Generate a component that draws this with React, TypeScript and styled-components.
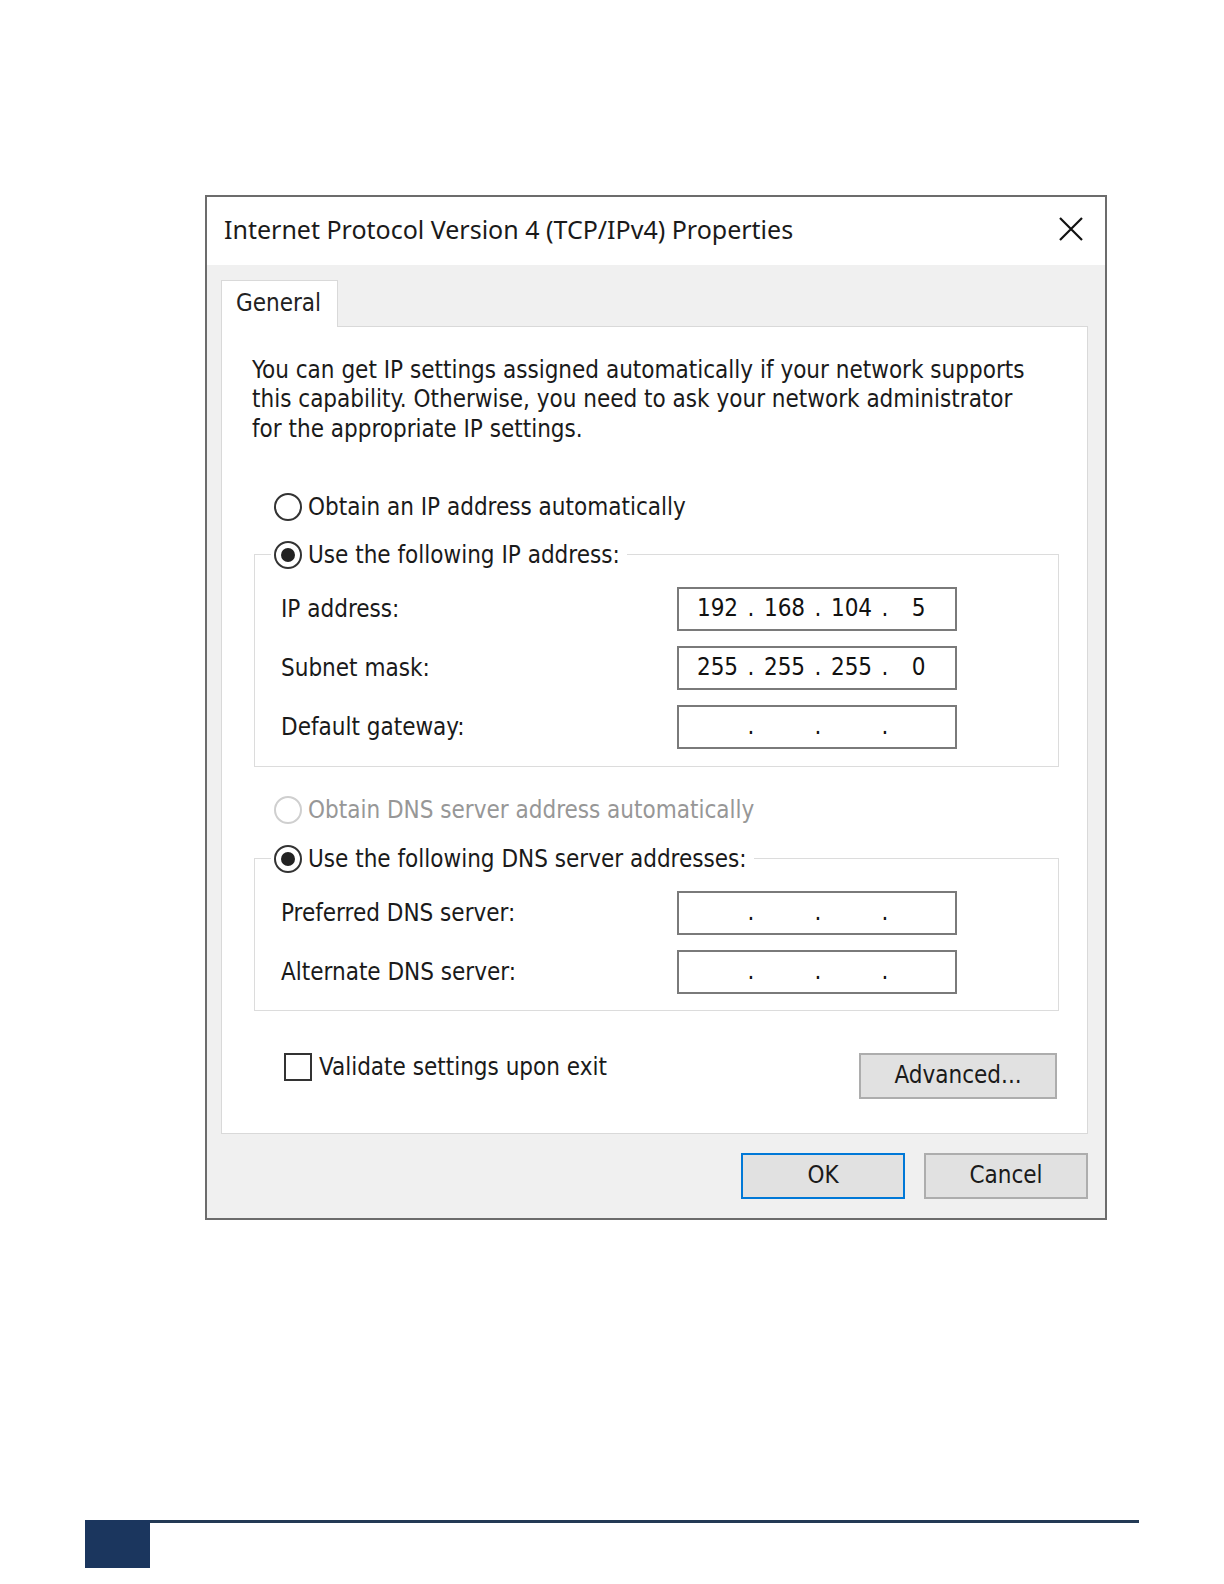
import React from "react";
import styled, { createGlobalStyle } from "styled-components";

const Global = createGlobalStyle`
  html, body { margin: 0; padding: 0; background: #ffffff; }
  body { width: 1224px; min-height: 1584px; }
  * { box-sizing: border-box; }
`;

const BODY_FONT = `"DejaVu Sans Condensed", "DejaVu Sans", "Liberation Sans", sans-serif`;

const Page = styled.div`
  width: 1224px;
  height: 1584px;
  padding-top: 195px;
  display: flex;
  flex-direction: column;
`;

const Dialog = styled.div`
  margin-left: 205px;
  width: 902px;
  height: 1025px;
  border: 2px solid #6c6c6c;
  background: #f0f0f0;
  display: flex;
  flex-direction: column;
`;

const TitleBar = styled.div`
  height: 68px;
  flex-shrink: 0;
  background: #ffffff;
  display: flex;
  align-items: center;
  justify-content: space-between;
  padding: 0 21px 4px 17px;
`;

const Title = styled.div`
  font-family: "Noto Sans", "Open Sans", sans-serif;
  font-size: 25px;
  color: #1a1a1a;
`;

const CloseIcon = () => (
  <svg width="26" height="26" viewBox="0 0 26 26">
    <path d="M2 2 L24 24 M24 2 L2 24" stroke="#111" strokeWidth="2.2" fill="none" />
  </svg>
);

const Body = styled.div`
  flex: 1;
  display: flex;
  flex-direction: column;
  padding: 15px 17px 0 14px;
`;

const TabStrip = styled.div`
  display: flex;
  height: 47px;
  position: relative;
  z-index: 1;
  margin-bottom: -1px;
`;

const Tab = styled.div`
  width: 117px;
  height: 47px;
  background: #ffffff;
  border: 1px solid #d9d9d9;
  border-bottom: none;
  display: flex;
  align-items: center;
  padding: 0 0 2px 14px;
  font-family: ${BODY_FONT};
  font-size: 24px;
  color: #222;
`;

const Panel = styled.div`
  height: 808px;
  flex-shrink: 0;
  background: #ffffff;
  border: 1px solid #d9d9d9;
  display: flex;
  flex-direction: column;
  padding: 29px 28px 0 32px;
  font-family: ${BODY_FONT};
  font-size: 24px;
  color: #1a1a1a;
`;

const Paragraph = styled.p`
  margin: 0 0 0 -2px;
  line-height: 29.3px;
  white-space: nowrap;
`;

const OptionRow = styled.label<{ $top: number; $disabled?: boolean }>`
  display: flex;
  align-items: center;
  gap: 6px;
  height: 30px;
  margin-top: ${(p) => p.$top}px;
  margin-left: 20px;
  color: ${(p) => (p.$disabled ? "#979797" : "#1a1a1a")};
`;

const RadioCircle = styled.span<{ $checked?: boolean; $disabled?: boolean }>`
  width: 28px;
  height: 28px;
  border-radius: 50%;
  border: 2px solid ${(p) => (p.$disabled ? "#cfcfcf" : "#333")};
  background: #fff;
  display: flex;
  align-items: center;
  justify-content: center;
  flex-shrink: 0;
  &::after {
    content: "";
    width: 14px;
    height: 14px;
    border-radius: 50%;
    background: #222;
    display: ${(p) => (p.$checked ? "block" : "none")};
  }
`;

const Group = styled.fieldset<{ $top: number; $bottom: number }>`
  margin: ${(p) => p.$top}px 0 0 0;
  border: 1px solid #dcdcdc;
  padding: 0 101px ${(p) => p.$bottom}px 26px;
  display: flex;
  flex-direction: column;
  gap: 15px;
`;

const Legend = styled.legend`
  margin-left: -10px;
  padding: 0 7px 0 3px;
  display: flex;
  align-items: center;
  gap: 6px;
  height: 30px;
  margin-bottom: 17px;
`;

const FieldRow = styled.div`
  display: flex;
  align-items: center;
  justify-content: space-between;
  height: 44px;
`;

const FieldLabel = styled.span``;

const IpBox = styled.div`
  width: 280px;
  height: 44px;
  border: 2px solid #7a7a7a;
  display: grid;
  grid-template-columns: 59px 8px 59px 8px 59px 8px 59px;
  align-items: center;
  padding: 0 0 1px 9px;
  color: #111;
`;

const Cell = styled.span`
  text-align: center;
`;

const Dot = styled.span`
  text-align: center;
`;

const BottomRow = styled.div`
  display: flex;
  justify-content: space-between;
  align-items: flex-start;
  margin-top: 42px;
  padding: 0 2px 0 30px;
`;

const CheckRow = styled.label`
  display: flex;
  align-items: center;
  gap: 7px;
  height: 28px;
`;

const CheckBox = styled.span`
  width: 28px;
  height: 28px;
  border: 2px solid #333;
  background: #fff;
  flex-shrink: 0;
`;

const Button = styled.button<{ $w: number; $default?: boolean; $top?: number }>`
  width: ${(p) => p.$w}px;
  height: 46px;
  margin-top: ${(p) => p.$top ?? 0}px;
  background: #e1e1e1;
  border: 2px solid ${(p) => (p.$default ? "#0078d7" : "#adadad")};
  font-family: ${BODY_FONT};
  font-size: 24px;
  color: #1a1a1a;
  padding: 0 0 2px 0;
  display: flex;
  align-items: center;
  justify-content: center;
`;

const ButtonBar = styled.div`
  display: flex;
  justify-content: flex-end;
  gap: 19px;
  margin-top: 19px;
`;

const Footer = styled.div`
  margin: 300px 0 0 85px;
  width: 1054px;
  display: flex;
  align-items: flex-start;
`;

const FooterSquare = styled.div`
  width: 65px;
  height: 48px;
  background: #1b365e;
`;

const FooterLine = styled.div`
  flex: 1;
  height: 3px;
  background: #233a55;
`;

type Ip = [string, string, string, string];

const IpField = ({ v }: { v: Ip }) => (
  <IpBox>
    <Cell>{v[0]}</Cell>
    <Dot>.</Dot>
    <Cell>{v[1]}</Cell>
    <Dot>.</Dot>
    <Cell>{v[2]}</Cell>
    <Dot>.</Dot>
    <Cell>{v[3]}</Cell>
  </IpBox>
);

const empty: Ip = ["", "", "", ""];

export default function App() {
  return (
    <>
      <Global />
      <Page>
        <Dialog>
          <TitleBar>
            <Title>Internet Protocol Version 4 (TCP/IPv4) Properties</Title>
            <CloseIcon />
          </TitleBar>
          <Body>
            <TabStrip>
              <Tab>General</Tab>
            </TabStrip>
            <Panel>
              <Paragraph>
                You can get IP settings assigned automatically if your network supports
                <br />
                this capability. Otherwise, you need to ask your network administrator
                <br />
                for the appropriate IP settings.
              </Paragraph>

              <OptionRow $top={48}>
                <RadioCircle />
                Obtain an IP address automatically
              </OptionRow>

              <Group $top={18} $bottom={17}>
                <Legend>
                  <RadioCircle $checked />
                  Use the following IP address:
                </Legend>
                <FieldRow>
                  <FieldLabel>IP address:</FieldLabel>
                  <IpField v={["192", "168", "104", "5"]} />
                </FieldRow>
                <FieldRow>
                  <FieldLabel>Subnet mask:</FieldLabel>
                  <IpField v={["255", "255", "255", "0"]} />
                </FieldRow>
                <FieldRow>
                  <FieldLabel>Default gateway:</FieldLabel>
                  <IpField v={empty} />
                </FieldRow>
              </Group>

              <OptionRow $top={28} $disabled>
                <RadioCircle $disabled />
                Obtain DNS server address automatically
              </OptionRow>

              <Group $top={19} $bottom={16}>
                <Legend>
                  <RadioCircle $checked />
                  Use the following DNS server addresses:
                </Legend>
                <FieldRow>
                  <FieldLabel>Preferred DNS server:</FieldLabel>
                  <IpField v={empty} />
                </FieldRow>
                <FieldRow>
                  <FieldLabel>Alternate DNS server:</FieldLabel>
                  <IpField v={empty} />
                </FieldRow>
              </Group>

              <BottomRow>
                <CheckRow>
                  <CheckBox />
                  Validate settings upon exit
                </CheckRow>
                <Button $w={198} $top={0}>Advanced...</Button>
              </BottomRow>
            </Panel>
            <ButtonBar>
              <Button $w={164} $default>OK</Button>
              <Button $w={164}>Cancel</Button>
            </ButtonBar>
          </Body>
        </Dialog>
        <Footer>
          <FooterSquare />
          <FooterLine />
        </Footer>
      </Page>
    </>
  );
}
